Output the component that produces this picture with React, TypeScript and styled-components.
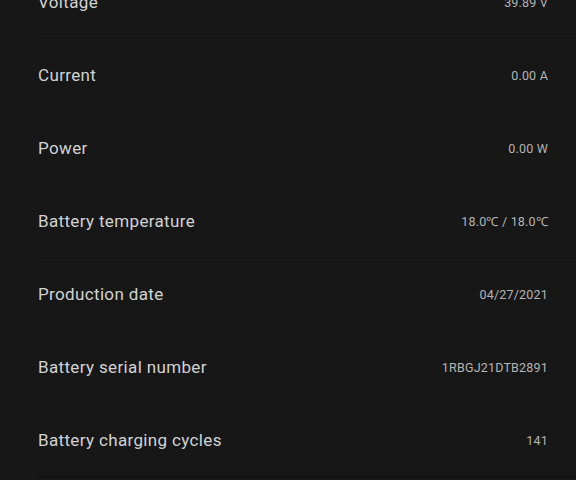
import React from 'react';
import styled, { createGlobalStyle } from 'styled-components';

type Item = { label: string; value: string; divider?: boolean; };

const ITEMS: Item[] = [
  { label: 'Voltage', value: '39.89 V', divider: true },
  { label: 'Current', value: '0.00 A' },
  { label: 'Power', value: '0.00 W' },
  { label: 'Battery temperature', value: '18.0℃ / 18.0℃', divider: true },
  { label: 'Production date', value: '04/27/2021' },
  { label: 'Battery serial number', value: '1RBGJ21DTB2891' },
  { label: 'Battery charging cycles', value: '141', divider: true },
];

const GlobalStyle = createGlobalStyle`
  html, body {
    margin: 0;
    padding: 0;
    background: #171717;
    overflow: hidden;
  }
  body {
    font-family: Roboto, "Liberation Sans", sans-serif;
  }
`;

const Page = styled.div`
  width: 576px;
  height: 480px;
  overflow: hidden;
  background: #171717;
`;

const List = styled.div`
  display: flex;
  flex-direction: column;
  margin-top: -34px;
`;

const Row = styled.div<{ $divider?: boolean }>`
  height: 73px;
  box-sizing: border-box;
  display: flex;
  align-items: center;
  justify-content: space-between;
  margin-left: 38px;
  padding-right: 28px;
  border-bottom: 1px solid ${ props => props.$divider ? '#111111' : 'transparent' };
`;

const Label = styled.div`
  font-size: 17px;
  color: #d2d2d2;
  letter-spacing: 0.35px;
`;

const Value = styled.div`
  font-size: 12.5px;
  color: #b4b4b4;
  letter-spacing: 0.2px;
`;

export default function App() {
  return (
    <Page>
      <GlobalStyle/>
      <List>
        { ITEMS.map(item => (
          <Row key={ item.label } $divider={ item.divider }>
            <Label>{ item.label }</Label>
            <Value>{ item.value }</Value>
          </Row>
        )) }
      </List>
    </Page>
  );
}
